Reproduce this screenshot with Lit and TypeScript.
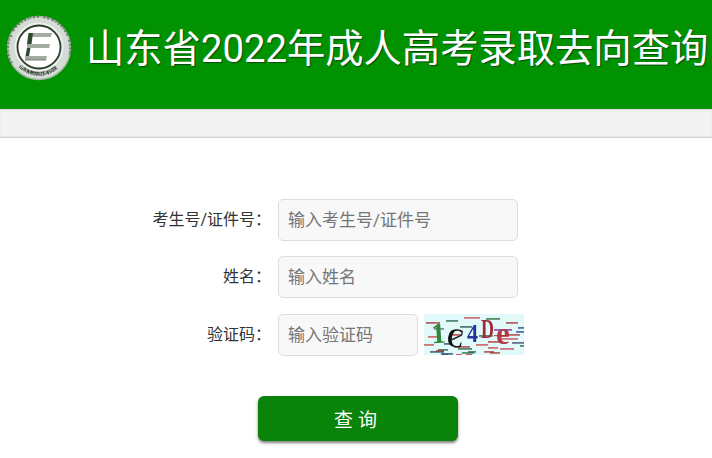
import { LitElement, html, css, svg } from "lit";
import { customElement } from "lit/decorators.js";

const noise: [number, number, number, string][] = [
  [2,8,14,"#a33"],[22,6,12,"#264"],[40,3,16,"#c45"],[62,4,14,"#263"],[82,8,12,"#a33"],
  [10,14,10,"#668"],[36,12,12,"#254"],[70,15,18,"#72a"],[92,17,8,"#248"],
  [4,22,12,"#c44"],[28,20,10,"#a33"],[55,21,14,"#264"],[78,24,16,"#c45"],
  [0,30,10,"#c44"],[20,29,8,"#346"],[52,30,12,"#c44"],[64,27,12,"#a33"],[88,28,12,"#446"],
  [6,37,14,"#246"],[34,34,14,"#264"],[60,37,10,"#a33"],[76,34,14,"#c45"],[96,31,4,"#264"],
  [14,35,10,"#264"],[30,32,16,"#a33"],[64,33,10,"#c44"],[82,20,14,"#a33"],
  [12,36,8,"#a33"],[44,37,8,"#264"],[94,13,6,"#248"],
  [17,39,12,"#246"],[38,38,12,"#264"],[66,38,10,"#a33"],[18,40,6,"#248"],[32,40,6,"#c22"],[42,40,6,"#c22"],
];

@customElement("app-root")
export class AppRoot extends LitElement {
  static styles = css`
    :host {
      display: block;
      width: 712px;
      height: 458px;
      overflow: hidden;
      background: #fff;
      font-family: Roboto, "Noto Sans CJK SC", sans-serif;
    }
    .header {
      height: 109px;
      background: #009200;
      box-sizing: border-box;
      display: flex;
      align-items: flex-start;
      padding: 15px 0 0 7px;
    }
    .logo { width: 65px; height: 67px; flex: none; filter: blur(0.35px); overflow: visible; }
    .title {
      margin: 8px 0 0 14px;
      font-size: 38.3px;
      line-height: 52px;
      color: #fff;
      white-space: nowrap;
      text-shadow: 1px 1px 1px #0b4a0b;
    }
    .band {
      height: 29px;
      box-sizing: border-box;
      background: #f3f3f3;
      box-shadow: inset 0 2px 2px -1px #d9d9d9, inset 0 -2px 2px -1px #c8c8c8;
    }
    .form {
      display: grid;
      grid-template-columns: 271px auto;
      row-gap: 15.4px;
      padding-top: 61px;
      justify-content: start;
    }
    .label {
      font-size: 16px;
      line-height: 42px;
      color: #333;
      text-align: right;
    }
    .field { margin-left: 7px; display: flex; gap: 6px; align-items: flex-start; }
    .input {
      width: 240px;
      height: 42px;
      box-sizing: border-box;
      border: 1px solid #ddd;
      border-radius: 5px;
      background: #f8f8f8;
      padding: 0 9px;
      font: inherit;
      font-size: 17px;
      color: #333;
      outline: none;
    }
    .input::placeholder { color: #757575; opacity: 1; }
    .input.short { width: 140px; }
    .captcha { width: 100px; height: 41px; display: block; background: #e2f9f9; filter: blur(0.4px); }
    .actions { display: flex; justify-content: center; padding: 40px 0 0 4px; }
    .btn {
      width: 200px;
      height: 45px;
      border: 0;
      border-radius: 6px;
      background: #0a830a;
      color: #fff;
      font: inherit;
      font-size: 19px;
      letter-spacing: 5px;
      box-shadow: 0 2px 3px rgba(0, 0, 0, 0.5);
    }
  `;

  private logo() {
    return html`<svg class="logo" viewBox="0 0 65 67" aria-hidden="true">
      <defs>
        <path id="ring" d="M6 48 A 30 30 0 1 1 58 48"></path>
        <path id="ringb" d="M12 52 A 28 28 0 0 0 52 52"></path>
      </defs>
      <circle cx="32" cy="33" r="31.5" fill="#d5dcd5" stroke="#a9b5a9" stroke-width="1.4"></circle>
      <text font-size="4" fill="#4c5c4c" font-family="Liberation Sans, sans-serif" font-weight="700">
        <textPath href="#ring" textLength="116">Shandong Education Admission Exam</textPath>
      </text>
      <text font-size="4.6" fill="#253025" font-weight="700">
        <textPath href="#ringb" textLength="42">山东省教育招生考试院</textPath>
      </text>
      <circle cx="32" cy="32" r="23.6" fill="none" stroke="#eef2ee" stroke-width="1.6"></circle>
      <circle cx="32" cy="32" r="21.5" fill="#fff" stroke="#2e3f2e" stroke-width="1.8"></circle>
      <path d="M22 18H45L44 22H22Z M20 29H43L42 33H20Z M18 41H40L39 45H18Z" fill="#a3aba3"></path>
      <path d="M21.5 18H26L24.5 29H20Z M20 33H23.5L22 41H18.5Z" fill="#2e4a2e"></path>
      <path d="M18 45H39" stroke="#5c6c5c" stroke-width="0.8"></path>
    </svg>`;
  }

  private captcha() {
    return html`<svg class="captcha" viewBox="0 0 100 41" aria-hidden="true">
      ${noise.map(([x, y, w, c]) => svg`<rect x=${x} y=${y} width=${w} height="1.8" fill=${c} opacity="0.75"></rect>`)}
      <g font-family="Liberation Serif, serif" font-weight="700">
        <text x="7" y="29" font-size="29" fill="#2d8a3a" transform="rotate(-4 14 20)">1</text>
        <text x="23" y="33" font-size="27" fill="#111" textLength="17" lengthAdjust="spacingAndGlyphs" transform="rotate(8 32 24)">C</text>
        <text x="43" y="28" font-size="25" fill="#22329a" textLength="11" lengthAdjust="spacingAndGlyphs">4</text>
        <text font-size="18" fill="#a02a3a" transform="translate(57 24) scale(1 1.5)">D</text>
        <text x="72" y="30" font-size="31" fill="#b23a48">e</text>
      </g>
      <rect x="27" y="23" width="11" height="1.4" fill="#222" transform="rotate(-25 32 23)"></rect>
      <rect x="70" y="21" width="14" height="1.2" fill="#a33" opacity="0.8"></rect>
    </svg>`;
  }

  render() {
    return html`
      <div class="header">
        ${this.logo()}
        <div class="title">山东省2022年成人高考录取去向查询</div>
      </div>
      <div class="band"></div>
      <div class="form">
        <div class="label">考生号/证件号：</div>
        <div class="field"><input class="input" placeholder="输入考生号/证件号" /></div>
        <div class="label">姓名：</div>
        <div class="field"><input class="input" placeholder="输入姓名" /></div>
        <div class="label">验证码：</div>
        <div class="field">
          <input class="input short" placeholder="输入验证码" />
          ${this.captcha()}
        </div>
      </div>
      <div class="actions"><button class="btn">查询</button></div>
    `;
  }
}
